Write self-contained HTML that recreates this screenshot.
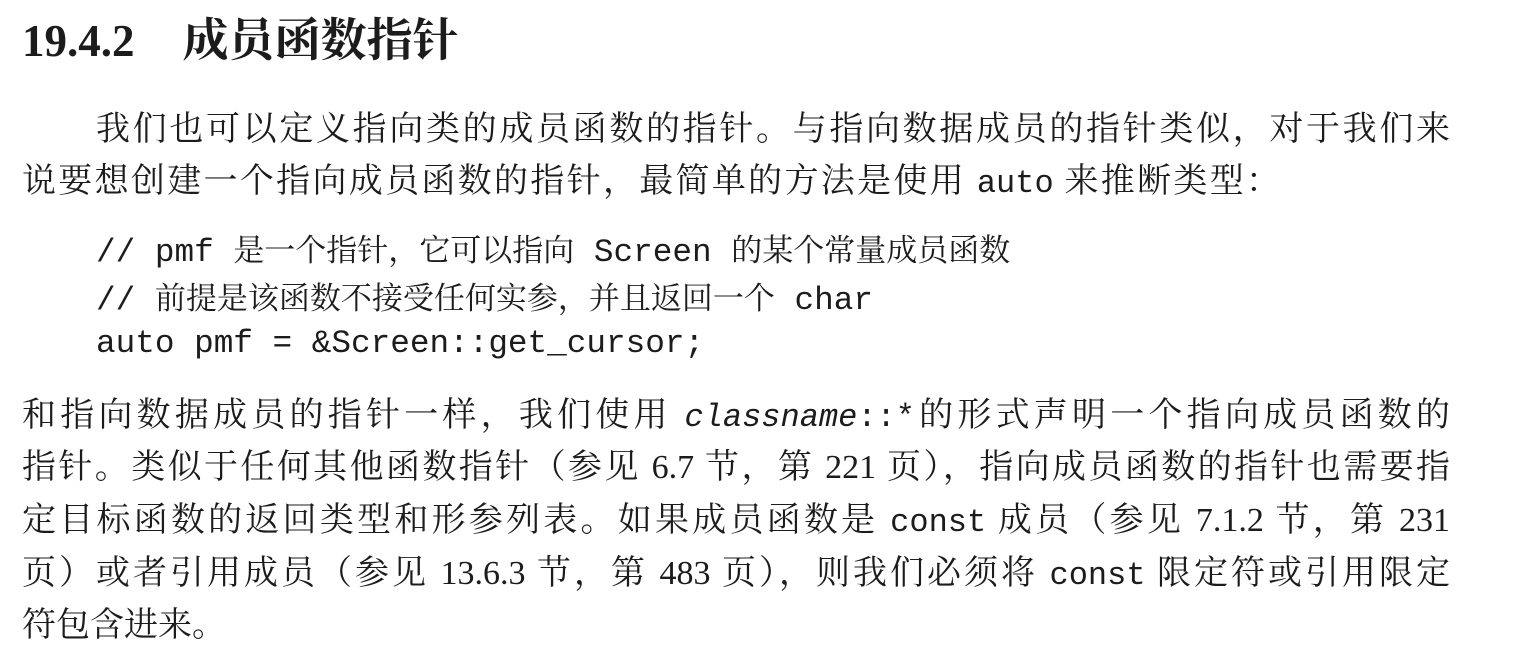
<!DOCTYPE html>
<html><head><meta charset="utf-8"><style>
body{margin:0;background:#fff;width:1516px;height:660px;overflow:hidden;position:relative;color:#1c1c1c;font-family:"Liberation Serif","Noto Serif CJK SC",serif;}
.l{position:absolute;left:22px;width:1428px;white-space:nowrap;font-size:34px;line-height:40px;text-align:justify;text-align-last:justify;}
.m{font-family:"Liberation Mono","Noto Sans CJK SC",monospace;font-size:32px;}
.c{position:absolute;left:96px;white-space:nowrap;font-family:"Liberation Mono",monospace;font-size:32.7px;line-height:40px;}
.c .z{font-family:"Noto Serif CJK SC",serif;font-size:31px;}
h1{position:absolute;left:22px;top:16px;margin:0;font-size:45px;line-height:50px;font-weight:bold;white-space:nowrap;}
h1 .z{font-size:46px;}
</style></head><body>
<h1>19.4.2<span style="display:inline-block;width:48px"></span><span class="z">成员函数指针</span></h1>
<div class="l" style="top:110px;left:96px;width:1354px">我们也可以定义指向类的成员函数的指针。与指向数据成员的指针类似，对于我们来</div>
<div class="l" style="top:162px;width:1258px">说要想创建一个指向成员函数的指针，最简单的方法是使用 <span class="m">auto</span> 来推断类型：</div>
<div class="c" style="top:228px">// pmf <span class="z">是一个指针，它可以指向</span> Screen <span class="z">的某个常量成员函数</span></div>
<div class="c" style="top:276px">// <span class="z">前提是该函数不接受任何实参，并且返回一个</span> char</div>
<div class="c" style="top:324px">auto pmf = &amp;Screen::get_cursor;</div>
<div class="l" style="top:396px">和指向数据成员的指针一样，我们使用 <i class="m">classname</i><span class="m">::*</span>的形式声明一个指向成员函数的</div>
<div class="l" style="top:448px">指针。类似于任何其他函数指针（参见 6.7 节，第 221 页），指向成员函数的指针也需要指</div>
<div class="l" style="top:501px">定目标函数的返回类型和形参列表。如果成员函数是 <span class="m">const</span> 成员（参见 7.1.2 节，第 231</div>
<div class="l" style="top:554px">页）或者引用成员（参见 13.6.3 节，第 483 页），则我们必须将 <span class="m">const</span> 限定符或引用限定</div>
<div class="l" style="top:606px;text-align-last:left">符包含进来。</div>
</body></html>
